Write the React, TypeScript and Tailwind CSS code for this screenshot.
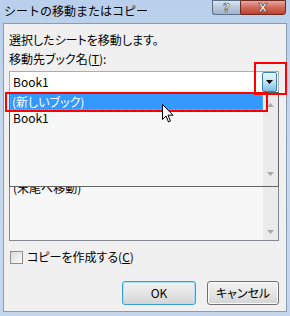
import React from "react";

const jp = { fontFamily: '"Noto Sans CJK JP", "Noto Sans", sans-serif' };
const palt = { ...jp, fontFeatureSettings: '"palt"' };

function ScrollArrow({ up }: { up?: boolean }) {
  return (
    <svg width="7" height="4" viewBox="0 0 7 4">
      {up ? <path d="M0 4 L3.5 0 L7 4 Z" fill="#a8a8a8" /> : <path d="M0 0 L3.5 4 L7 0 Z" fill="#a8a8a8" />}
    </svg>
  );
}

function Cursor() {
  return (
    <svg width="12" height="19" viewBox="0 0 12 19">
      <path
        d="M0.5 0.5 L0.5 15.5 L4 12 L6.5 18 L8.5 17 L6 11.2 L11 11.2 Z"
        fill="#ffffff"
        stroke="#000000"
        strokeWidth="1"
        strokeLinejoin="miter"
      />
    </svg>
  );
}

export default function App() {
  return (
    <div
      className="relative w-[290px] h-[316px] overflow-hidden bg-gradient-to-b from-[#b9cfeb] via-[#c7d9ef] to-[#c3d6ee] text-[12px] text-black"
      style={jp}
    >
      {/* title bar */}
      <div className="flex h-[23px] items-start justify-between pl-[4px] pr-[4px]">
        <div className="mt-[3px] text-[12px] leading-[15px] text-black">シートの移動またはコピー</div>
        <div className="flex">
          <div className="flex h-[15px] w-[28px] items-center justify-center rounded-bl-[3px] border border-r-0 border-[#5b6e88] bg-gradient-to-b from-[#dbe5f2] via-[#b7c7dc] to-[#9fb4cf]">
            <span
              className="text-[12px] font-bold leading-none text-white"
              style={{ fontFamily: '"DejaVu Sans", sans-serif', WebkitTextStroke: "0.6px #3a4a60" }}
            >
              ?
            </span>
          </div>
          <div className="flex h-[15px] w-[46px] items-center justify-center rounded-br-[3px] border border-[#6a2a22] bg-gradient-to-b from-[#e8a99f] via-[#d0685a] to-[#c2402e]">
            <span
              className="text-[12px] font-bold leading-none text-white"
              style={{ fontFamily: '"DejaVu Sans", sans-serif', WebkitTextStroke: "0.6px #4a1a14" }}
            >
              X
            </span>
          </div>
        </div>
      </div>

      {/* client panel */}
      <div className="mx-[3px] h-[289px] border border-[#8a9cb4] bg-[#f0f0f0] pl-[5px] pr-[7px] pt-[8px]">
        <div className="leading-[16px]" style={palt}>選択したシートを移動します。</div>
        <div className="mt-[3px] leading-[16px]" style={palt}>
          移動先ブック名(<span className="underline">T</span>):
        </div>

        <div className="mt-[4px] flex h-[22px] items-center border border-[#abadb3] bg-white">
          <span className="flex-1 pl-[3px] leading-[16px]" style={palt}>Book1</span>
          <div className="mr-[1px] flex h-[20px] w-[15px] items-center justify-center rounded-[2px] border border-[#3c7fb1] bg-gradient-to-b from-[#eaf6fd] via-[#bee6fd] to-[#7fbde4]">
            <svg width="7" height="4" viewBox="0 0 7 4">
              <path d="M0 0 L7 0 L3.5 4 Z" fill="#000" />
            </svg>
          </div>
        </div>

        {/* sheet list (mostly covered by the open dropdown) */}
        <div className="mt-[38px] flex h-[110px] border border-[#828790] bg-[#f7f7f7]">
          <div className="flex-1 pt-[48px]" style={palt}>
            <div className="h-[16px] pl-[3px] leading-[16px]">(末尾へ移動)</div>
          </div>
          <div className="flex w-[15px] flex-col items-center justify-between bg-[#ebebeb] py-[6px]">
            <ScrollArrow up />
            <ScrollArrow />
          </div>
        </div>

        <label className="mt-[8px] flex items-center gap-[4px] pl-[1px]" style={palt}>
          <span className="h-[13px] w-[13px] border border-[#8f8f8f] bg-gradient-to-br from-[#dcdcdc] to-[#fafafa]" />
          <span className="leading-[16px]">
            コピーを作成する(<span className="underline">C</span>)
          </span>
        </label>

        <div className="mt-[16px] flex justify-end gap-[11px]">
          <button className="h-[24px] w-[74px] rounded-[3px] border border-[#3c9cd6] bg-gradient-to-b from-[#f2f2f2] via-[#e6e6e6] to-[#d4d4d4] leading-[16px] shadow-[inset_0_0_0_1px_#a9e0fb]" style={palt}>
            OK
          </button>
          <button className="h-[24px] w-[72px] rounded-[3px] border border-[#707070] bg-gradient-to-b from-[#f2f2f2] via-[#e6e6e6] to-[#d4d4d4] leading-[16px] shadow-[inset_0_0_0_1px_#fbfbfb]" style={palt}>
            キャンセル
          </button>
        </div>
      </div>

      {/* open dropdown list */}
      <div className="absolute left-[9px] top-[92px] flex h-[95px] w-[270px] border border-[#646464] bg-[#f7f7f7]" style={palt}>
        <div className="flex-1">
          <div className="h-[17px] bg-[#3399ff] pl-[2px] leading-[17px] text-white outline-1 -outline-offset-1 outline-dotted outline-[#f0a030]">
            (新しいブック)
          </div>
          <div className="h-[16px] pl-[3px] leading-[16px]">Book1</div>
        </div>
        <div className="flex w-[15px] flex-col items-center justify-between bg-[#ebebeb] py-[10px]">
          <ScrollArrow up />
          <ScrollArrow />
        </div>
      </div>

      {/* red highlight frames */}
      <div className="absolute left-[254px] top-[62px] h-[33px] w-[33px] border-2 border-[#ff0000]" />
      <div className="absolute left-[5px] top-[92px] h-[20px] w-[263px] border-2 border-[#ff0000]" />

      {/* mouse pointer */}
      <div className="absolute left-[162px] top-[104px]">
        <Cursor />
      </div>
    </div>
  );
}
